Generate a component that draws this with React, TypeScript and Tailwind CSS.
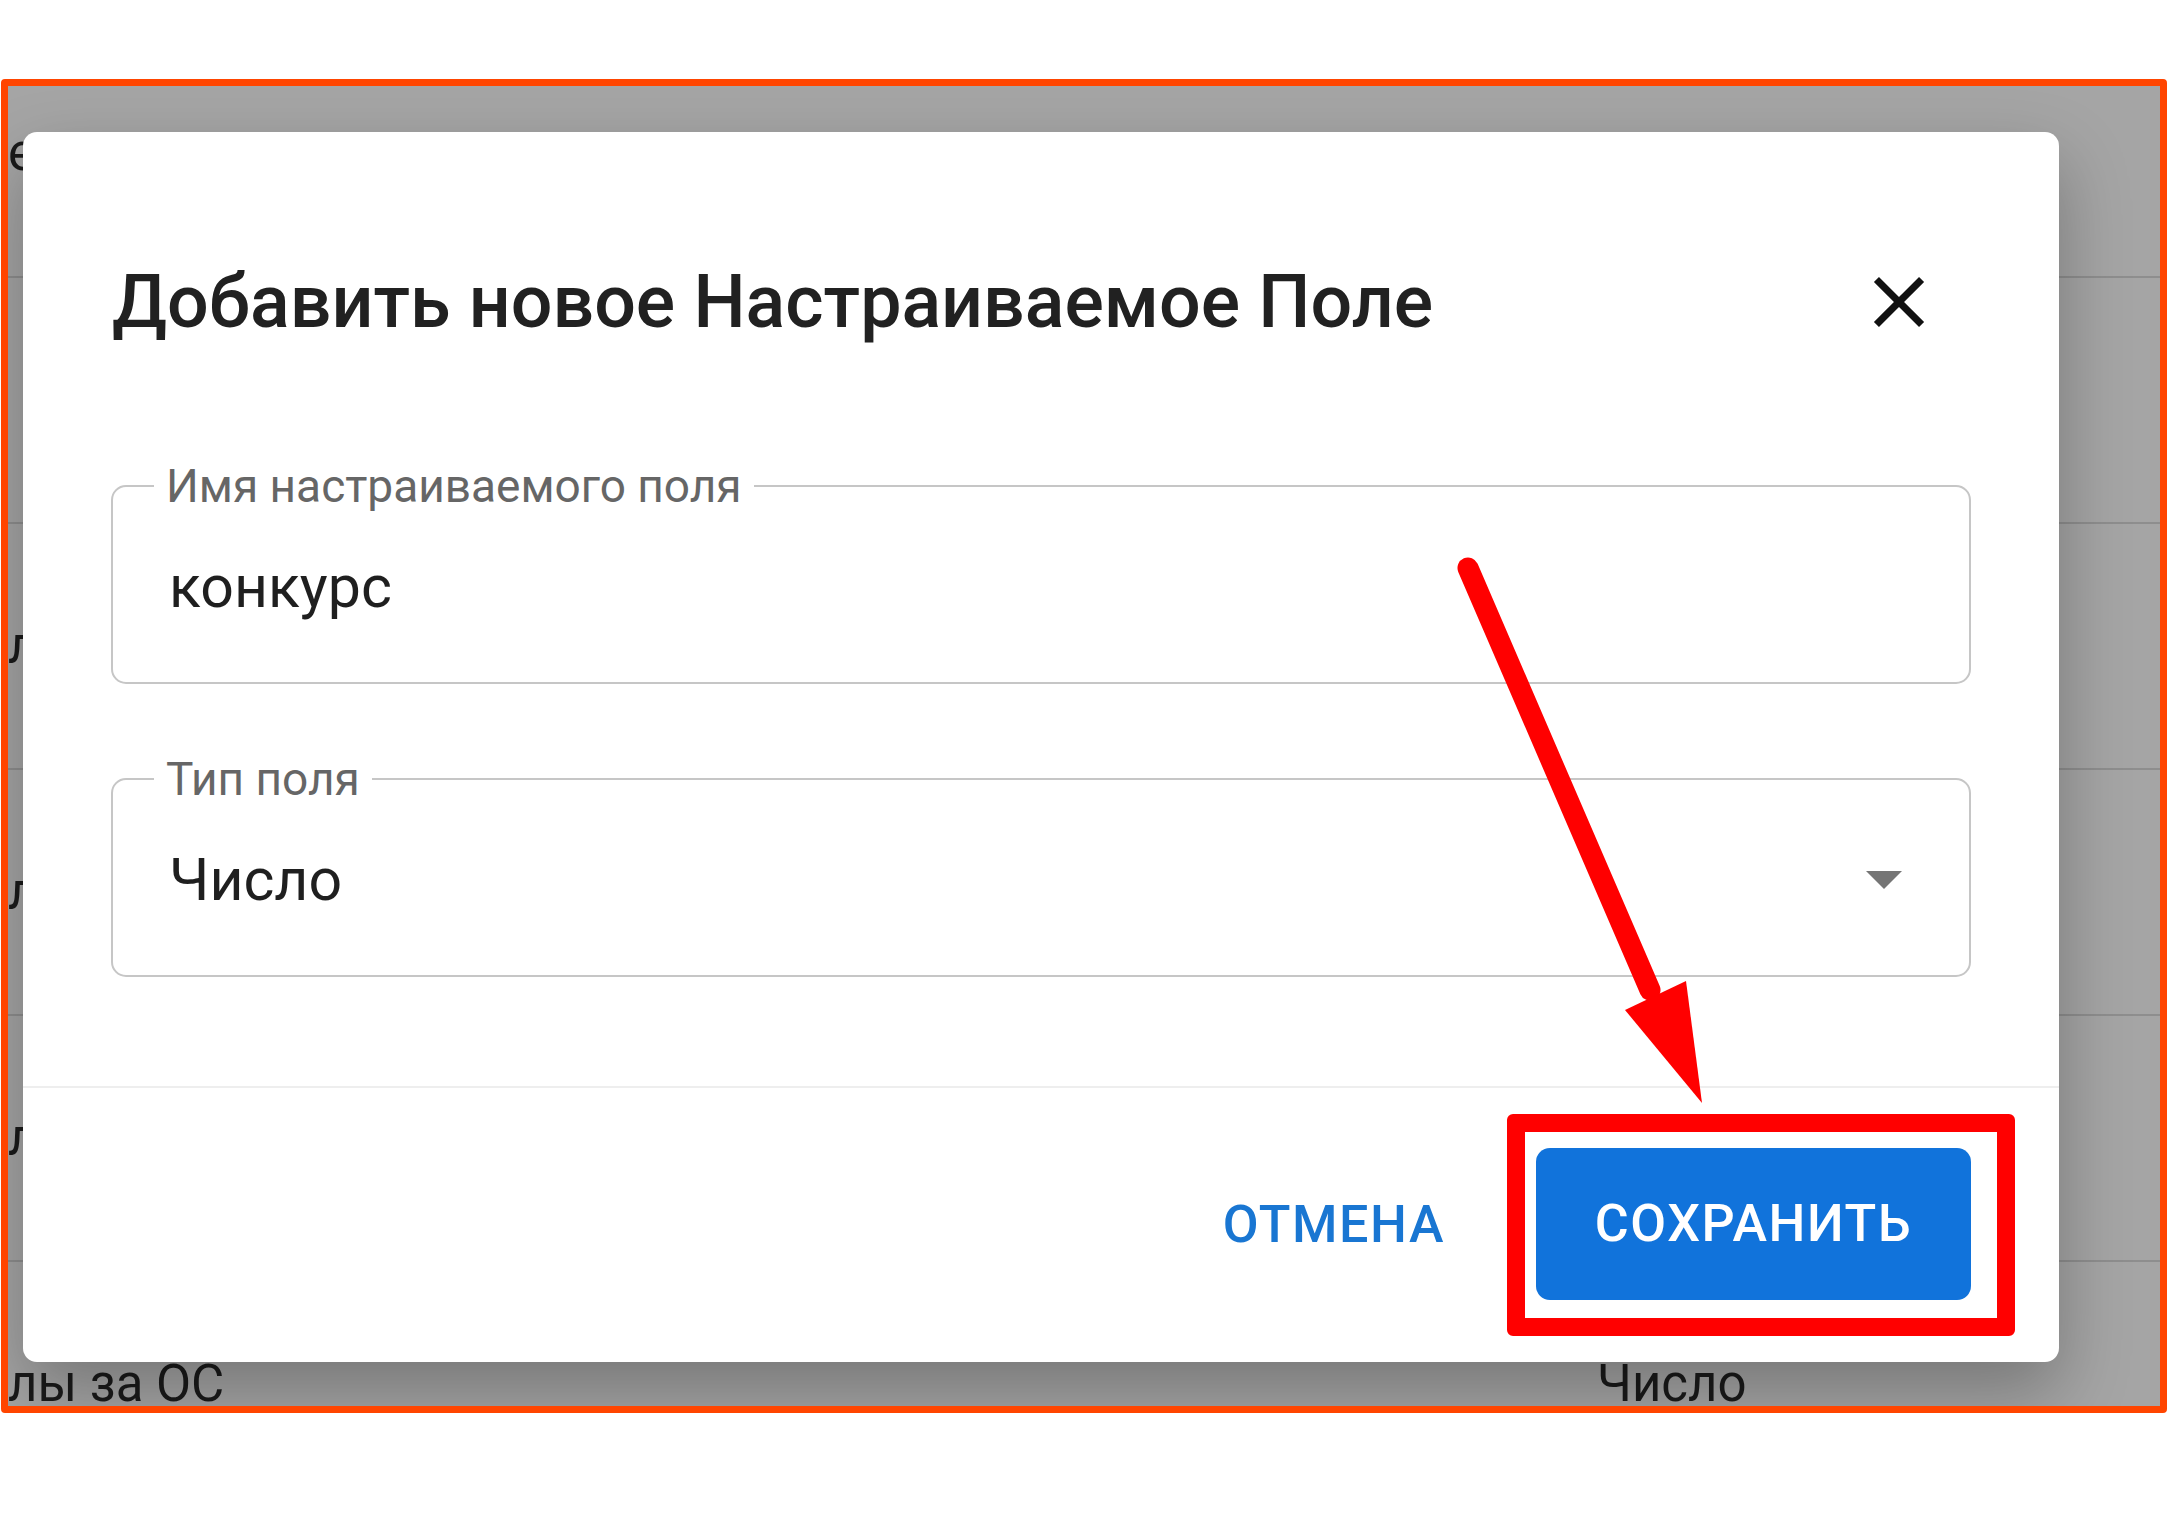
import React from "react";

// строки таблицы, которые видны из-под затемнения
const rows = [
  { h: "h-[192px]", left: "е2", right: "", pad: "pb-[56px]" },
  { h: "h-[246px]", left: "", right: "", pad: "" },
  { h: "h-[246px]", left: "лы", right: "Число", pad: "" },
  { h: "h-[246px]", left: "лы", right: "Число", pad: "" },
  { h: "h-[246px]", left: "лы", right: "Число", pad: "" },
  { h: "h-[246px]", left: "лы за ОС", right: "Число", pad: "" },
];

const OutlinedField = ({ label, value, select }: { label: string; value: string; select?: boolean }) => (
  <fieldset className="border-2 border-[#c6c6c6] rounded-[15px] p-0 m-0 min-w-0">
    <legend className="ml-[41px] px-[12px] text-[46px] leading-[46px] text-[#666666]">{label}</legend>
    <div className="h-[173px] pb-[18px] pl-[56px] pr-[67px] flex items-center justify-between">
      <span className="text-[59px] text-[#1f1f1f]">{value}</span>
      {select && (
        <svg width="36" height="18" viewBox="0 0 36 18">
          <polygon points="0,0 36,0 18,18" fill="#757575" />
        </svg>
      )}
    </div>
  </fieldset>
);

export default function App() {
  return (
    <div className="relative w-[2172px] h-[1521px] bg-white pt-[79px] pl-[1px] overflow-hidden font-['Roboto',sans-serif]">
      {/* рамка скриншота */}
      <div className="relative w-[2166px] h-[1334px] border-[7px] border-[#ff4500] rounded-[4px] bg-[#a5a5a5] overflow-hidden">
        {/* таблица под диалогом */}
        <div className="flex flex-col">
          {rows.map((r, i) => (
            <div key={i} className={`${r.h} ${r.pad} shrink-0 border-b-2 border-[#8e8e8e] flex items-center text-[51px] text-[#1a1a1a]`}>
              <span className="w-[1589px] whitespace-nowrap overflow-hidden">{r.left}</span>
              <span>{r.right}</span>
            </div>
          ))}
        </div>

        {/* диалог */}
        <div className="absolute left-[15px] top-[46px] w-[2036px] h-[1230px] rounded-[14px] bg-white shadow-[0_30px_70px_rgba(0,0,0,0.28)] flex flex-col">
          <div className="h-[333px] pt-[9px] pl-[89px] pr-[117px] flex items-center justify-between">
            <h2 className="text-[73.5px] font-medium text-[#212121]">Добавить новое Настраиваемое Поле</h2>
            <svg width="86" height="86" viewBox="0 0 24 24">
              <path d="M19 6.41 17.59 5 12 10.59 6.41 5 5 6.41 10.59 12 5 17.59 6.41 19 12 13.41 17.59 19 19 17.59 13.41 12z" fill="#111111" />
            </svg>
          </div>

          <div className="px-[88px] flex flex-col gap-[72px]">
            <OutlinedField label="Имя настраиваемого поля" value="конкурс" />
            <OutlinedField label="Тип поля" value="Число" select />
          </div>

          <div className="mt-[109px] h-[277px] border-t-2 border-[#eeeeee] pr-[44px] flex items-center justify-end">
            <button className="mr-[32px] px-[30px] text-[52px] font-medium uppercase tracking-[0.03em] text-[#1976d2]">
              Отмена
            </button>
            <div className="border-[18px] border-[#ff0000] rounded-[6px] pl-[11px] pr-[26px] pt-[16px] pb-[18px] bg-white">
              <button className="w-[435px] h-[152px] rounded-[14px] bg-[#1173db] text-white text-[52px] font-medium uppercase tracking-[0.03em]">
                Сохранить
              </button>
            </div>
          </div>
        </div>
      </div>

      {/* стрелка-указатель */}
      <svg className="absolute left-0 top-0 pointer-events-none" width="2172" height="1521" viewBox="0 0 2172 1521">
        <line x1="1468" y1="568" x2="1650" y2="990" stroke="#ff0000" strokeWidth="21" strokeLinecap="round" />
        <polygon points="1625,1010 1686,981 1702,1103" fill="#ff0000" />
      </svg>
    </div>
  );
}
